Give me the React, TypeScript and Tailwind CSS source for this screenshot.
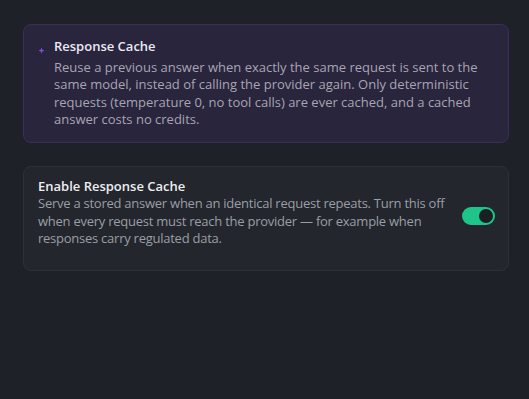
import React from 'react';

const Sparkle = () => (
  <svg width="7" height="7" viewBox="0 0 8 8" className="shrink-0 mt-[9px]">
    <path d="M4 0.5 L5 3 L7.5 4 L5 5 L4 7.5 L3 5 L0.5 4 L3 3 Z" fill="#7c4ddb" />
  </svg>
);

const App: React.FC = () => {
  return (
    <div
      className="w-[529px] h-[399px] bg-[#1e2127] pl-[23px] pr-[20px] pt-[24px] text-[13px] leading-[17.5px]"
      style={{ fontFamily: '"Open Sans", "Noto Sans", sans-serif' }}
    >
      {/* info box */}
      <div className="flex gap-[9px] bg-[#29253c] border border-[#3a2f5c] rounded-lg pl-[14px] pr-[14px] pt-[13px] pb-[13px]">
        <Sparkle />
        <div className="flex flex-col">
          <div className="text-[#ece8f4] font-semibold">Response Cache</div>
          <p className="text-[#a8a4b4] mt-[3px]">
            Reuse a previous answer when exactly the same request is sent to the same model, instead of calling the provider again. Only deterministic requests (temperature 0, no tool calls) are ever cached, and a cached answer costs no credits.
          </p>
        </div>
      </div>

      {/* setting row */}
      <div className="mt-[23px] flex items-center gap-[4px] bg-[#23262c] border border-[#2d3037] rounded-lg pl-[14px] pr-[13px] pt-[11px] pb-[22px]">
        <div className="flex-1 flex flex-col">
          <div className="text-[#eceef1] font-semibold">Enable Response Cache</div>
          <p className="text-[#9a9ea6] tracking-[-0.25px] pr-[4px]">
            Serve a stored answer when an identical request repeats. Turn this off when every request must reach the provider — for example when responses carry regulated data.
          </p>
        </div>
        <button className="shrink-0 w-[33px] h-[18px] rounded-full bg-[#1fc48b] flex items-center justify-end pr-[2px] mb-[-6px]">
          <span className="w-[14px] h-[14px] rounded-full bg-[#1b1e23]" />
        </button>
      </div>
    </div>
  );
};

export default App;
